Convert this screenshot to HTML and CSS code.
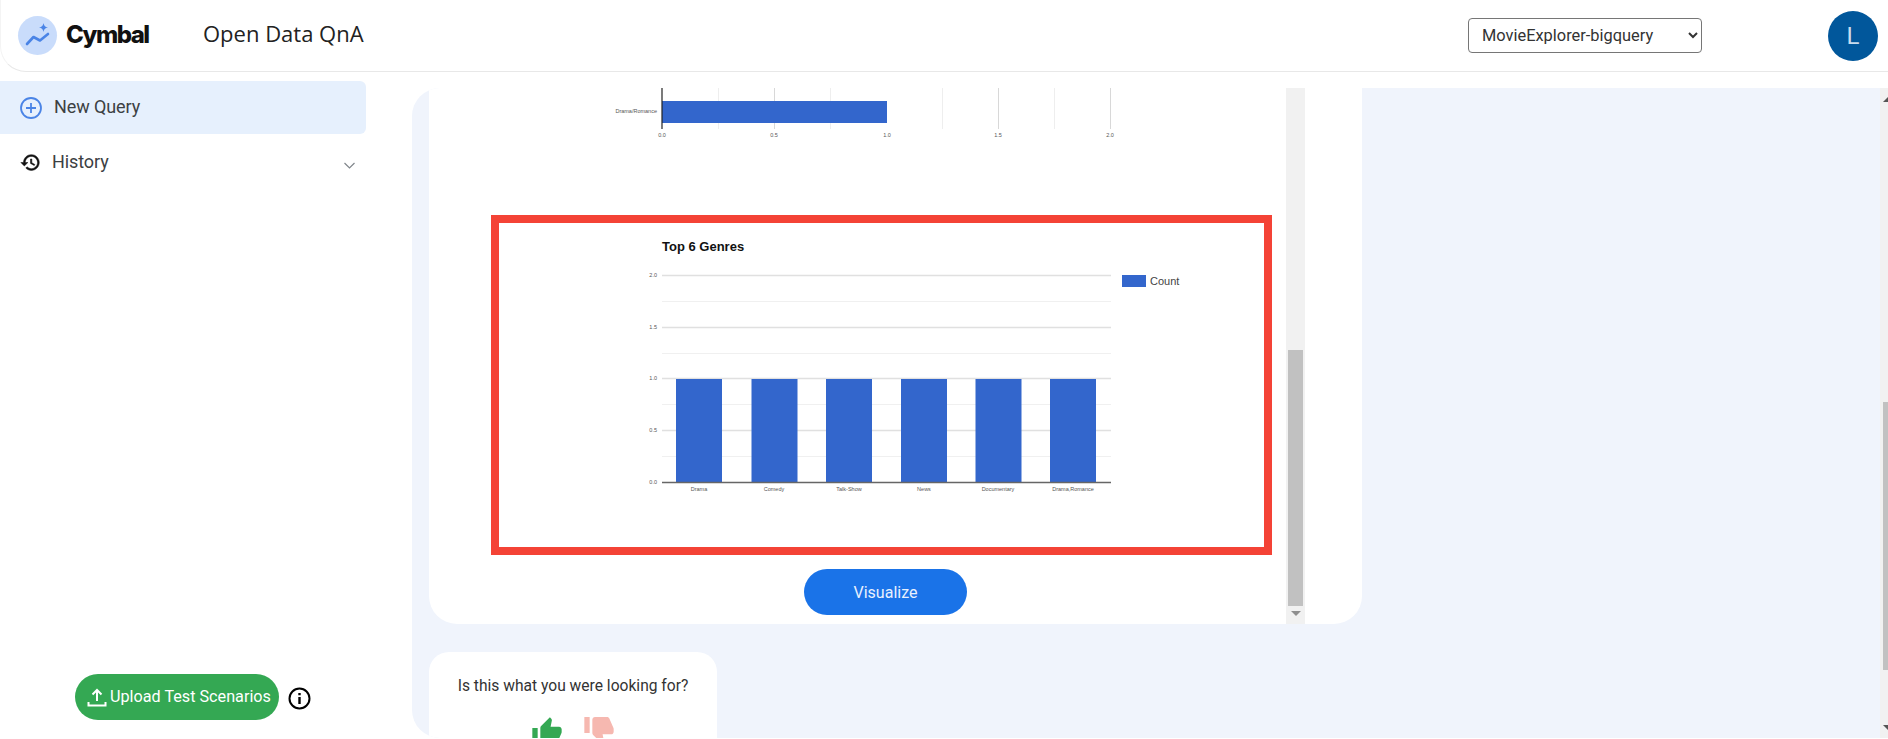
FILE: index.html
```html
<!DOCTYPE html>
<html lang="en">
<head>
    <meta charset="UTF-8">
    <title>Open Data QnA</title>
    <link rel="stylesheet" href="styles.css">
</head>
<body>
    <header class="topbar">
        <div class="logo-circle">
            <svg width="39" height="39" viewBox="0 0 39 39" fill="none">
                <path d="M9 28l6.500 -7 6.500 3.500 8 -6.500" stroke="#4a84e6" stroke-width="2.600" stroke-linecap="round" stroke-linejoin="round"/>
                <path d="M25.500 7c.6 3 1.400 3.800 4.500 4.500-3.100.7-3.900 1.500-4.500 4.500-.6-3-1.400-3.800-4.500-4.500 3.100-.7 3.900-1.500 4.500-4.500z" fill="#4a84e6"/>
            </svg>
        </div>
        <span class="brand-name">Cymbal</span>
        <span class="app-title">Open Data QnA</span>
        <select class="source-select">
            <option>MovieExplorer-bigquery</option>
        </select>
        <div class="avatar">L</div>
    </header>

    <div class="layout">
        <!-- left menu -->
        <aside class="sidebar">
            <div class="nav-row nav-active">
                <svg width="22" height="22" viewBox="0 0 22 22" fill="none" stroke="#4a84e6" stroke-width="1.8">
                    <circle cx="11" cy="11" r="10"/>
                    <path d="M11 6v10M6 11h10"/>
                </svg>
                <span class="nav-label">New Query</span>
            </div>
            <div class="nav-row nav-history">
                <svg width="21" height="21" viewBox="0 0 24 24" fill="#111" stroke="#111" stroke-width="0.6">
                    <path d="M13 3c-4.970 0-9 4.030-9 9H1l3.890 3.890.07.14L9 12H6c0-3.870 3.130-7 7-7s7 3.130 7 7-3.130 7-7 7c-1.930 0-3.680-.79-4.940-2.060l-1.420 1.420C8.270 19.990 10.510 21 13 21c4.970 0 9-4.030 9-9s-4.030-9-9-9zm-1 5v5l4.280 2.540.72-1.210-3.500-2.080V8H12z"/>
                </svg>
                <span class="nav-label">History</span>
                <svg class="chevron" width="11" height="7" viewBox="0 0 11 7" fill="none" stroke="#80868b" stroke-width="1.2">
                    <path d="M.5 1l5 5 5-5"/>
                </svg>
            </div>
            <div class="upload-row">
                <button class="upload-btn">
                    <svg width="20" height="20" viewBox="0 0 20 20" fill="none" stroke="#fff" stroke-width="2">
                        <path d="M10 14V3M5.500 7.500L10 3l4.500 4.500M1.500 15v3.500h17V15"/>
                    </svg>
                    <span class="upload-label">Upload Test Scenarios</span>
                </button>
                <svg class="info-icon" width="23" height="23" viewBox="0 0 23 23" fill="none" stroke="#000" stroke-width="2">
                    <circle cx="11.500" cy="11.500" r="10"/>
                    <path d="M11.500 10v7M11.500 6v2.200" stroke-width="2.400"/>
                </svg>
            </div>
        </aside>

        <main class="main">
            <div class="main-column">
                <section class="card">
                    <div class="card-body">
                        <svg class="small-chart" width="857" height="57" viewBox="429 88 857 57">
                            <path d="M718.500 88v41M830.500 88v41M942.500 88v41M1054.500 88v41" stroke="#eeeeee"/>
                            <path d="M774.500 88v41M998.500 88v41M1110.500 88v41" stroke="#d8d8d8"/>
                            <rect x="662" y="101" width="225" height="22" fill="#3366cc"/>
                            <path d="M662 88v41" stroke="#222" stroke-width="1.2"/>
                            <g class="tick" text-anchor="middle">
                                <text x="662" y="137">0.0</text>
                                <text x="774" y="137">0.5</text>
                                <text x="887" y="137">1.0</text>
                                <text x="998" y="137">1.5</text>
                                <text x="1110" y="137">2.0</text>
                            </g>
                            <text class="tick" x="657" y="113" text-anchor="end">Drama/Romance</text>
                        </svg>

                        <div class="chart-frame">
                            <svg width="765" height="324" viewBox="499 223 765 324">
                                <text class="chart-title" x="662" y="251">Top 6 Genres</text>
                                <path d="M662 275.500h449M662 327.500h449M662 378.500h449M662 430.500h449" stroke="#e0e0e0" stroke-width="1.4"/>
                                <path d="M662 301.500h449M662 353.500h449M662 404.500h449M662 456.500h449" stroke="#f0f0f0"/>
                                <g fill="#3366cc">
                                    <rect x="676" y="379" width="46" height="103"/>
                                    <rect x="751.500" y="379" width="46" height="103"/>
                                    <rect x="826" y="379" width="46" height="103"/>
                                    <rect x="901" y="379" width="46" height="103"/>
                                    <rect x="975.500" y="379" width="46" height="103"/>
                                    <rect x="1050" y="379" width="46" height="103"/>
                                </g>
                                <path d="M662 482.500h449" stroke="#666" stroke-width="1.5"/>
                                <g class="tick" text-anchor="end">
                                    <text x="657" y="277">2.0</text>
                                    <text x="657" y="329">1.5</text>
                                    <text x="657" y="380">1.0</text>
                                    <text x="657" y="432">0.5</text>
                                    <text x="657" y="484">0.0</text>
                                </g>
                                <g class="tick" text-anchor="middle">
                                    <text x="699" y="491">Drama</text>
                                    <text x="774" y="491">Comedy</text>
                                    <text x="849" y="491">Talk-Show</text>
                                    <text x="924" y="491">News</text>
                                    <text x="998" y="491">Documentary</text>
                                    <text x="1073" y="491">Drama,Romance</text>
                                </g>
                                <rect x="1122" y="275" width="24" height="12" fill="#3366cc"/>
                                <text class="legend-label" x="1150" y="285">Count</text>
                            </svg>
                        </div>

                        <button class="visualize-btn">Visualize</button>
                    </div>

                    <div class="card-scrollbar">
                        <div class="card-thumb"></div>
                        <div class="arrow-down"></div>
                    </div>
                </section>

                <section class="feedback">
                    <p class="feedback-text">Is this what you were looking for?</p>
                    <div class="thumbs">
                        <svg width="32" height="32" viewBox="0 0 24 24" fill="#34a853">
                            <path d="M1 21h4V9H1v12zm22-11c0-1.100-.9-2-2-2h-6.310l.95-4.570.03-.32c0-.41-.17-.79-.44-1.060L14.170 1 7.590 7.590C7.220 7.950 7 8.450 7 9v10c0 1.100.9 2 2 2h9c.83 0 1.540-.5 1.840-1.220l3.020-7.050c.09-.23.14-.47.14-.73v-2z"/>
                        </svg>
                        <svg class="thumb-down" width="32" height="32" viewBox="0 0 24 24" fill="#f6b8b0">
                            <path d="M15 3H6c-.83 0-1.540.5-1.840 1.220l-3.020 7.050c-.09.23-.14.47-.14.73v2c0 1.100.9 2 2 2h6.310l-.95 4.570-.03.32c0 .41.17.79.44 1.060L9.830 23l6.590-6.590c.36-.36.58-.86.58-1.410V5c0-1.100-.9-2-2-2zm4 0v12h4V3h-4z"/>
                        </svg>
                    </div>
                </section>
            </div>

            <div class="page-scrollbar">
                <div class="arrow-up"></div>
                <div class="page-thumb"></div>
                <div class="arrow-down page-arrow-down"></div>
            </div>
        </main>
    </div>
</body>
</html>
```

FILE: styles.css
```css
* {
    box-sizing: border-box;
}

body {
    margin: 0;
    height: 739px;
    overflow: hidden;
    background-color: #fff;
    color: #202124;
    font-family: Roboto, "Open Sans", sans-serif;
}

/* top bar */
.topbar {
    display: flex;
    align-items: center;
    height: 72px;
    padding-left: 17px;
    padding-right: 10px;
    border-bottom: 1px solid #e8e8e8;
    border-left: 1px solid #f4f4f4;
    border-bottom-left-radius: 26px;
}

.logo-circle {
    width: 39px;
    height: 39px;
    border-radius: 50%;
    background-color: #c9dcfb;
}

.brand-name {
    width: 84px;
    margin-left: 9px;
    padding-bottom: 2px;
    font-family: Inter, sans-serif;
    font-size: 24px;
    font-weight: 800;
    letter-spacing: -1.5px;
    color: #111;
}

.app-title {
    margin-left: 53px;
    padding-bottom: 6px;
    font-family: "Open Sans", sans-serif;
    font-size: 22px;
    color: #222;
}

.source-select {
    width: 234px;
    height: 35px;
    margin-left: auto;
    padding-left: 9px;
    border: 1px solid #767676;
    border-radius: 4px;
    background-color: #fff;
    color: #333;
    font-family: Roboto, sans-serif;
    font-size: 16.4px;
}

.avatar {
    display: flex;
    align-items: center;
    justify-content: center;
    width: 50px;
    height: 50px;
    margin-left: 126px;
    border-radius: 50%;
    background-color: #01579b;
    color: #c9dcee;
    font-size: 24px;
}

.layout {
    display: flex;
    height: 667px;
}

/* left menu */
.sidebar {
    display: flex;
    flex-direction: column;
    width: 412px;
    flex-shrink: 0;
}

.nav-row {
    display: flex;
    align-items: center;
    gap: 12px;
    width: 366px;
    color: #3c4043;
    font-size: 18px;
}

.nav-label {
    padding-bottom: 2px;
    letter-spacing: -0.1px;
}

.nav-active {
    height: 53px;
    margin-top: 9px;
    padding-left: 20px;
    border-radius: 0 6px 6px 0;
    background-color: #e6f0fd;
}

.nav-history {
    height: 56px;
    padding-left: 20px;
    padding-right: 11px;
    gap: 11px;
}

.chevron {
    margin-left: auto;
    margin-top: 6px;
}

.upload-row {
    display: flex;
    align-items: center;
    margin-top: auto;
    padding-left: 75px;
    padding-bottom: 19px;
}

.upload-btn {
    display: flex;
    align-items: center;
    gap: 3px;
    width: 204px;
    height: 46px;
    padding-left: 12px;
    border: none;
    border-radius: 23px;
    background-color: #34a853;
    color: #fff;
    font-family: Roboto, sans-serif;
    font-size: 16.2px;
}

.upload-label {
    padding-bottom: 2px;
}

.info-icon {
    margin-left: 9px;
    margin-top: 3px;
}

/* main area */
.main {
    display: flex;
    flex: 1;
    height: 650px;
    margin-top: 16px;
    padding-left: 17px;
    overflow: hidden;
    border-radius: 28px 0 0 28px;
    background-color: #f0f4fc;
}

.main-column {
    width: 933px;
}

.card {
    display: flex;
    height: 536px;
    padding-right: 57px;
    border-radius: 0 0 28px 28px;
    background-color: #fff;
}

.card-body {
    display: flex;
    flex-direction: column;
    align-items: flex-start;
    width: 857px;
}

.small-chart {
    display: block;
}

.tick {
    font-family: "Liberation Sans", Arial, sans-serif;
    font-size: 5.5px;
    fill: #555;
}

.chart-frame {
    width: 781px;
    height: 340px;
    margin-top: 70px;
    margin-left: 62px;
    border: 8px solid #f44336;
}

.chart-frame svg {
    display: block;
}

.chart-title {
    font-family: "Liberation Sans", Arial, sans-serif;
    font-size: 13px;
    font-weight: bold;
    fill: #111;
}

.legend-label {
    font-family: "Liberation Sans", Arial, sans-serif;
    font-size: 11px;
    fill: #444;
}

.visualize-btn {
    width: 163px;
    height: 46px;
    margin-top: 14px;
    margin-left: 375px;
    border: none;
    border-radius: 23px;
    background-color: #1a73e8;
    color: #e8f0fe;
    font-family: Roboto, sans-serif;
    font-size: 16px;
}

.card-scrollbar {
    display: flex;
    flex-direction: column;
    align-items: center;
    width: 19px;
    padding-top: 262px;
    background-color: #f1f1f1;
}

.card-thumb {
    width: 15px;
    height: 256px;
    background-color: #c1c1c1;
}

.arrow-down {
    width: 0;
    height: 0;
    margin-top: 5px;
    border-left: 5px solid transparent;
    border-right: 5px solid transparent;
    border-top: 5px solid #8f8f8f;
}

/* feedback box, cut off by the bottom of the window */
.feedback {
    width: 288px;
    height: 120px;
    margin-top: 28px;
    padding-top: 24px;
    border-radius: 20px;
    background-color: #fff;
}

.feedback-text {
    margin: 0;
    text-align: center;
    font-size: 15.6px;
    line-height: 20px;
    color: #333;
}

.thumbs {
    display: flex;
    justify-content: center;
    gap: 20px;
    margin-top: 20px;
}

.thumb-down {
    margin-top: -3px;
    transform: scaleX(-1);
}

.page-scrollbar {
    width: 8px;
    margin-left: auto;
    padding-top: 9px;
    overflow: hidden;
    background-color: #f1f1f1;
}

.arrow-up {
    width: 0;
    height: 0;
    margin-left: 3px;
    border-left: 5px solid transparent;
    border-right: 5px solid transparent;
    border-bottom: 5px solid #555;
}

.page-thumb {
    height: 268px;
    margin-top: 300px;
    margin-left: 3px;
    background-color: #c1c1c1;
}

.page-arrow-down {
    margin-top: 55px;
    margin-left: 3px;
    border-top-color: #555;
}
```
